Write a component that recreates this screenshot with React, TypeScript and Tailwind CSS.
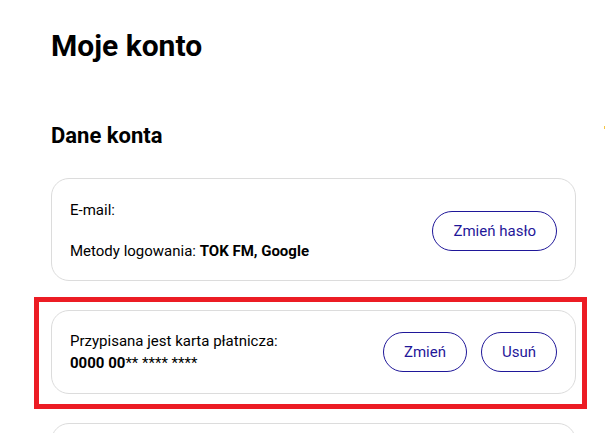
import React from 'react';

const btn =
  'h-10 rounded-full border border-[#1f1799] px-5 text-[15px] leading-5 text-[#1f1799] bg-white';

const App: React.FC = () => {
  return (
    <div
      className="relative h-[433px] bg-white text-black overflow-hidden"
      style={{ fontFamily: 'Roboto, "Liberation Sans", sans-serif' }}
    >
      <span className="absolute left-[604px] top-[126px] h-[3px] w-px bg-[#f5c542]" />
      <div className="ml-[51px] w-[525px] pt-[28px]">
        <h1 className="text-[30px] font-bold leading-9">Moje konto</h1>
        <h2 className="mt-[58px] text-[22px] font-bold leading-7">Dane konta</h2>

        <div className="mt-[28px] flex items-center justify-between rounded-[18px] border border-[#dcdcdc] px-[18px] pt-[21px] pb-[19px]">
          <div className="flex flex-col gap-[21px] text-[15px] leading-5">
            <span>E-mail:</span>
            <span>
              Metody logowania: <b className="font-bold">TOK FM, Google</b>
            </span>
          </div>
          <button className={btn}>Zmień hasło</button>
        </div>

        <div className="relative mt-[29px]">
          <div className="flex items-center justify-between rounded-[18px] border border-[#dcdcdc] px-[18px] py-5">
            <div className="flex flex-col gap-[2px] text-[15px] leading-5">
              <span>Przypisana jest karta płatnicza:</span>
              <span>
                <b className="font-bold">0000 00</b>** **** ****
              </span>
            </div>
            <div className="flex gap-[14px]">
              <button className={btn}>Zmień</button>
              <button className={btn}>Usuń</button>
            </div>
          </div>
          <div className="pointer-events-none absolute -left-[17px] -right-[11px] -top-[13px] -bottom-[15px] border-[5px] border-[#ec1c24]" />
        </div>

        <div className="mt-[29px] h-[60px] rounded-[18px] border border-[#dcdcdc]" />
      </div>
    </div>
  );
};

export default App;
